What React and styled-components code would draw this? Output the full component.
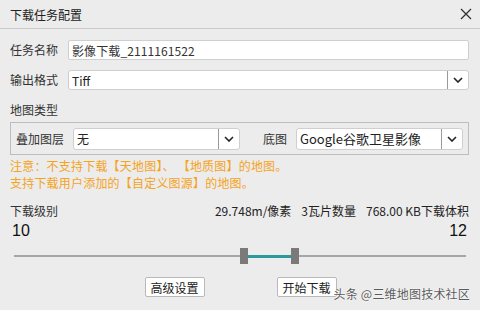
import React from "react";
import styled, { createGlobalStyle } from "styled-components";

// --------------------------------------------------

const GlobalStyle = createGlobalStyle`
	html, body {
		margin: 0;
		padding: 0;
		background: #ececec;
	}
	body {
		font-family: "Noto Sans CJK SC", "Liberation Sans", sans-serif;
		font-size: 12px;
		color: #333;
	}
`;

const Dialog = styled.div`
	position: relative;
	width: 480px;
	height: 310px;
	background: #ececec;
	overflow: hidden;
`;

const TitleBar = styled.div`
	height: 28px;
	display: flex;
	align-items: center;
	justify-content: space-between;
	padding: 0 8px 0 10px;
	border-bottom: 1px solid #c9c9c9;
	font-size: 12px;
	color: #222;
`;

const Body = styled.div`
	padding: 11px 11px 0 10px;
	display: flex;
	flex-direction: column;
`;

const Row = styled.div`
	display: flex;
	align-items: center;
	height: 20px;
	margin-bottom: ${ props => props.mb || 0 }px;
`;

const Label = styled.span`
	width: ${ props => props.w || 58 }px;
	flex: none;
	white-space: nowrap;
	color: #333;
	line-height: 20px;
`;

const TextBox = styled.div`
	flex: 1;
	height: 18px;
	background: #fff;
	border: 1px solid #cfcfcf;
	border-radius: 2px;
	padding-left: 3px;
	display: flex;
	align-items: center;
	font-size: 12px;
	color: #333;
	letter-spacing: 0.1px;
`;

const Select = styled.div`
	flex: ${ props => (props.w ? "none" : 1) };
	width: ${ props => (props.w ? `${ props.w }px` : "auto") };
	height: ${ props => props.h || 18 }px;
	background: #fff;
	border: 1px solid #cfcfcf;
	border-radius: 3px;
	display: flex;
	align-items: stretch;
	box-sizing: content-box;
`;

const SelectValue = styled.div`
	flex: 1;
	display: flex;
	align-items: center;
	padding-left: 3px;
	color: #222;
	font-size: ${ props => props.fs || 12 }px;
	white-space: nowrap;
	overflow: hidden;
`;

const SelectArrow = styled.div`
	width: 20px;
	border-left: 1px solid #9a9a9a;
	display: flex;
	align-items: center;
	justify-content: center;
`;

const SectionTitle = styled.div`
	height: 20px;
	line-height: 20px;
	margin-bottom: 2px;
`;

const GroupBox = styled.div`
	height: 31px;
	border: 1px solid #bdbdbd;
	display: flex;
	align-items: center;
	padding: 0 6px 0 5px;
`;

const Notice = styled.div`
	color: #f5a31c;
	font-size: 12px;
	line-height: 17px;
	margin-top: 2px;
	letter-spacing: 0.2px;
`;

const LevelHeader = styled.div`
	display: flex;
	justify-content: space-between;
	align-items: center;
	height: 18px;
	margin-top: 10px;
`;

const Stats = styled.div`
	display: flex;
	gap: 10px;
	font-size: 12px;
	color: #222;
`;

const Levels = styled.div`
	display: flex;
	justify-content: space-between;
	padding: 0 2px;
	height: 24px;
	align-items: center;
	font-family: "Liberation Sans", "Noto Sans", sans-serif;
	font-size: 16px;
	color: #111;
`;

const SliderWrap = styled.div`
	position: relative;
	margin: 5px 3px 0 4px;
	height: 16px;
	display: flex;
	align-items: center;
`;

const Track = styled.div`
	flex: 1;
	height: 2px;
	background: #a6a6a6;
`;

const Fill = styled.div`
	position: absolute;
	top: 7px;
	height: 3px;
	background: #2a9a9c;
`;

const Handle = styled.div`
	position: absolute;
	top: 0;
	width: 8px;
	height: 16px;
	margin-left: -4px;
	background: #7a7a7a;
`;

const Buttons = styled.div`
	display: flex;
	justify-content: center;
	gap: 72px;
	margin-top: 13px;
	padding-left: 2px;
`;

const Button = styled.div`
	width: 58px;
	height: 18px;
	background: #fff;
	border: 1px solid #b9b9b9;
	border-radius: 2px;
	display: flex;
	align-items: center;
	justify-content: center;
	font-size: 12px;
	color: #222;
`;

const Watermark = styled.div`
	position: absolute;
	right: 10px;
	bottom: 8px;
	font-size: 12px;
	color: #5a5a5a;
	letter-spacing: 0.2px;
	text-shadow: 0 0 2px #fff, 0 0 1px #fff;
`;

// --------------------------------------------------

const Chevron = () => (
	<svg width="10" height="6" viewBox="0 0 10 6">
		<path d="M1 1 L5 5 L9 1" fill="none" stroke="#222" strokeWidth="1.6" />
	</svg>
);

const Close = () => (
	<svg width="12" height="12" viewBox="0 0 12 12">
		<path d="M1 1 L11 11 M11 1 L1 11" stroke="#333" strokeWidth="1.3" />
	</svg>
);

const App = () => (
	<Dialog>
		<GlobalStyle />
		<TitleBar>
			<span>下载任务配置</span>
			<Close />
		</TitleBar>
		<Body>
			<Row mb={10}>
				<Label>任务名称</Label>
				<TextBox>影像下载_2111161522</TextBox>
			</Row>
			<Row mb={10}>
				<Label>输出格式</Label>
				<Select>
					<SelectValue>Tiff</SelectValue>
					<SelectArrow><Chevron /></SelectArrow>
				</Select>
			</Row>
			<SectionTitle>地图类型</SectionTitle>
			<GroupBox>
				<Label w={57}>叠加图层</Label>
				<Select w={165} h={20}>
					<SelectValue>无</SelectValue>
					<SelectArrow><Chevron /></SelectArrow>
				</Select>
				<Label w={33} style={ { marginLeft: 23 } }>底图</Label>
				<Select w={165} h={20}>
					<SelectValue fs={13}>Google谷歌卫星影像</SelectValue>
					<SelectArrow><Chevron /></SelectArrow>
				</Select>
			</GroupBox>
			<Notice>
				注意：不支持下载【天地图】、 【地质图】的地图。<br />
				支持下载用户添加的【自定义图源】的地图。
			</Notice>
			<LevelHeader>
				<span>下载级别</span>
				<Stats>
					<span>29.748m/像素</span>
					<span>3瓦片数量</span>
					<span>768.00 KB下载体积</span>
				</Stats>
			</LevelHeader>
			<Levels>
				<span>10</span>
				<span>12</span>
			</Levels>
			<SliderWrap>
				<Track />
				<Fill style={ { left: "50.9%", width: "11.3%" } } />
				<Handle style={ { left: "50.9%" } } />
				<Handle style={ { left: "62.2%" } } />
			</SliderWrap>
			<Buttons>
				<Button>高级设置</Button>
				<Button>开始下载</Button>
			</Buttons>
		</Body>
		<Watermark>头条 @三维地图技术社区</Watermark>
	</Dialog>
);

export default App;
